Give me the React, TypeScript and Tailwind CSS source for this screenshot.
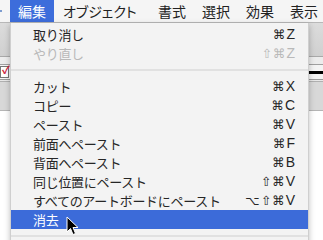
const font = "font-['Noto_Sans_CJK_JP','Noto_Sans',sans-serif]";

type Item = { label: string; keys?: string; disabled?: boolean; active?: boolean } | 'sep';

const items: Item[] = [
  { label: '取り消し', keys: '⌘Z' },
  { label: 'やり直し', keys: '⇧⌘Z', disabled: true },
  'sep',
  { label: 'カット', keys: '⌘X' },
  { label: 'コピー', keys: '⌘C' },
  { label: 'ペースト', keys: '⌘V' },
  { label: '前面へペースト', keys: '⌘F' },
  { label: '背面へペースト', keys: '⌘B' },
  { label: '同じ位置にペースト', keys: '⇧⌘V' },
  { label: 'すべてのアートボードにペースト', keys: '⌥⇧⌘V' },
  { label: '消去', active: true },
  'sep',
];

const menus = ['オブジェクト', '書式', '選択', '効果', '表示'];

function Keys({ keys }: { keys: string }) {
  return (
    <span className="flex items-center gap-[1px] font-['DejaVu_Sans',sans-serif] text-[12.5px] tracking-normal">
      {keys.split('').map((k, i) => (
        <span key={i} className={/[A-Z]/.test(k) ? "font-['Liberation_Sans',sans-serif] text-[14px]" : ''}>
          {k}
        </span>
      ))}
    </span>
  );
}

export default function App() {
  return (
    <div className={`relative w-[323px] h-[240px] overflow-hidden bg-white ${font}`}>
      {/* menu bar */}
      <div className="flex h-[22px] items-center bg-[#f5f5f5] text-[14px] leading-[22px] text-[#222] whitespace-nowrap [font-feature-settings:'palt']">
        <div className="w-[10px] h-full relative shrink-0">
          <div className="absolute left-0 top-[10px] w-[2px] h-[2px] bg-[#7d9ccf]" />
        </div>
        <div className="h-full w-[44px] text-center shrink-0 bg-[#3d6ddb] text-white">編集</div>
        <div className="flex items-center shrink-0 gap-[16px] pl-[9px]">
          {menus.map((m, i) => (
            <div key={m} className={`shrink-0 ${i === 0 ? 'w-[79px]' : ''}`}>{m}</div>
          ))}
        </div>
      </div>
      <div className="h-[1px] bg-[#b8b8b8]" />

      {/* document toolbars behind the menu */}
      <div className="h-[34px] bg-gradient-to-b from-[#dcdcdc] to-[#d0d0d0] border-b border-[#a9a9a9]" />
      <div className="h-[8px] bg-[#ececec] border-b border-[#a0a0a0]" />
      <div className="h-[15px] bg-[#f4f4f4] flex items-center justify-between border-b border-[#9a9a9a]">
        <div className="w-[9px] h-[12px] bg-white border border-[#777] relative">
          <span className="absolute -top-[3px] left-[1px] text-[11px] leading-none text-[#d0203a] font-bold">✓</span>
        </div>
        <div className="w-[20px] h-[3px] bg-black" />
      </div>
      <div className="h-[2px] bg-[#e8e8e8] border-b border-[#b0b0b0]" />
      <div className="h-[29px] bg-[#d8d8d8] border-b border-[#b5b5b5]" />

      {/* edit menu */}
      <div className="absolute left-[10px] top-[23px] w-[299px] h-[230px] bg-[#f3f3f3] border-x border-[#cfcfcf] shadow-[0_2px_6px_rgba(0,0,0,0.25)] pt-[2px] text-[13px] leading-[19px] tracking-[-0.3px] whitespace-nowrap">
        {items.map((it, i) =>
          it === 'sep' ? (
            <div key={i} className="h-[14px] flex items-center">
              <div className="h-[2px] w-full bg-[#e1e1e1]" />
            </div>
          ) : (
            <div
              key={i}
              className={`h-[19px] flex items-center justify-between pl-[22px] pr-[13px] ${
                it.active ? 'bg-[#3c6bd9] text-white' : it.disabled ? 'text-[#b9b9b9]' : 'text-[#262626]'
              }`}
            >
              <span>{it.label}</span>
              {it.keys && <Keys keys={it.keys} />}
            </div>
          )
        )}
      </div>

      {/* mouse cursor */}
      <svg className="absolute left-[66px] top-[216px]" width="13" height="20" viewBox="0 0 13 20">
        <path d="M1 1 L1 16 L4.5 12.5 L7 18.5 L9.5 17.5 L7 11.5 L12 11.5 Z" fill="#000" stroke="#fff" strokeWidth="1" strokeLinejoin="round" />
      </svg>
    </div>
  );
}
